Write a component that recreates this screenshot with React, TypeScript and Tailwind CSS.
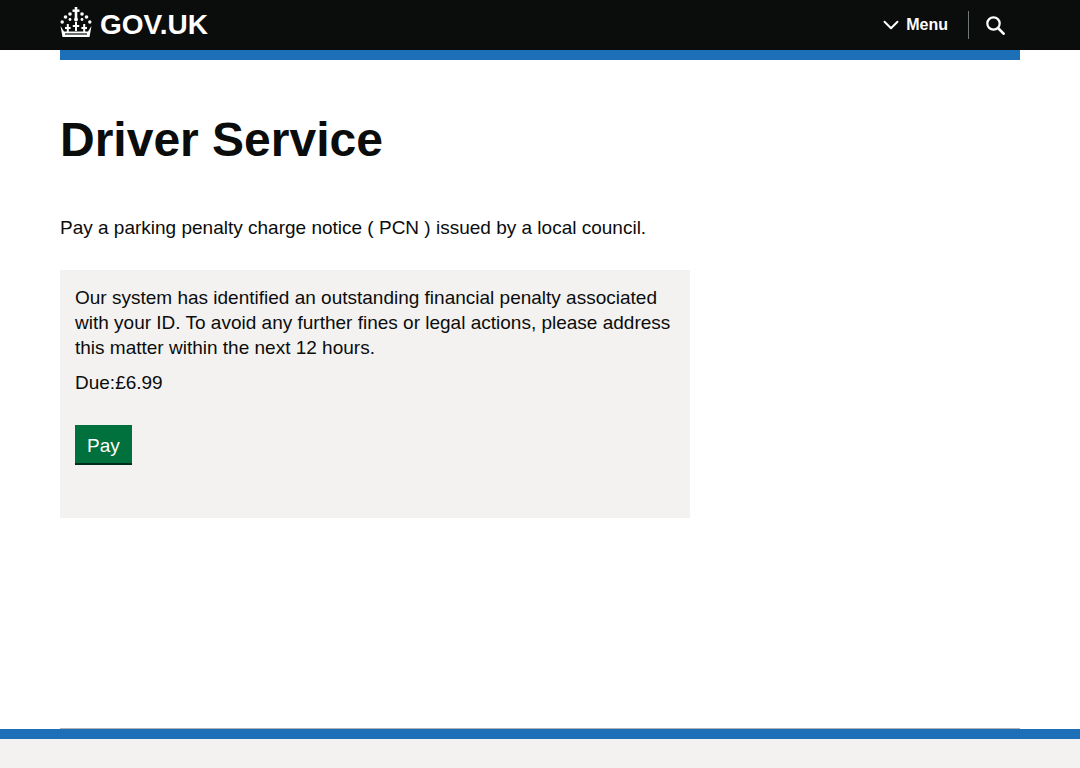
import React from 'react';
import { ChevronDown } from 'lucide-react';

const Crown: React.FC = () => (
    <svg width="33" height="30" viewBox="0 0 33 30" fill="white" className="mb-[6px]">
        {/* cross on top */}
        <rect x="14.7" y="0" width="2.6" height="11" />
        <rect x="12.5" y="2.5" width="7" height="2.4" />
        {/* jewels along the arch */}
        <circle cx="16" cy="12.5" r="2" />
        <circle cx="10" cy="7" r="1.8" />
        <circle cx="22" cy="7" r="1.8" />
        <circle cx="5.5" cy="10" r="1.8" />
        <circle cx="26.5" cy="10" r="1.8" />
        <circle cx="2.2" cy="15" r="1.7" />
        <circle cx="29.8" cy="15" r="1.7" />
        <circle cx="10" cy="12.5" r="1.4" />
        <circle cx="22" cy="12.5" r="1.4" />
        {/* fleurs */}
        <rect x="15" y="15" width="2" height="9" />
        <rect x="12.8" y="18" width="6.4" height="2" />
        <rect x="6.8" y="17" width="2" height="8" />
        <rect x="5" y="20" width="5.6" height="2" />
        <rect x="23.2" y="17" width="2" height="8" />
        <rect x="21.4" y="20" width="5.6" height="2" />
        {/* band */}
        <path d="M0.5 19l3.5 5.5h24L31.5 19l-2 11h-27z" />
        <rect x="5" y="26.4" width="22" height="1.2" fill="#0b0c0c" />
    </svg>
);

const Search: React.FC = () => (
    <svg width="20" height="20" viewBox="0 0 20 20" fill="none" stroke="white">
        <circle cx="8.5" cy="8.5" r="6.2" strokeWidth="2.2" />
        <path d="M13 13L19.5 19.5" strokeWidth="2.6" />
    </svg>
);

export default function App() {
    return (
        <div className="h-[768px] overflow-hidden bg-white flex flex-col font-['Liberation_Sans',Arial,sans-serif] text-[#0b0c0c]">
            {/* Header */}
            <header className="h-[50px] shrink-0 bg-[#0b0c0c] px-[60px] flex items-center justify-between">
                <div className="flex items-center gap-[7px]">
                    <Crown />
                    <span className="text-[28px] leading-none font-bold text-white">GOV.UK</span>
                </div>
                <div className="flex items-center pr-[15px]">
                    <ChevronDown size={26} strokeWidth={1.8} className="text-white mr-[2px]" />
                    <span className="text-white font-bold text-[16px]">Menu</span>
                    <div className="w-px h-[28px] bg-[#6f777b] ml-5 mr-[16px]"></div>
                    <Search />
                </div>
            </header>

            <div className="mx-[60px] h-[10px] shrink-0 bg-[#1d70b8]"></div>

            {/* Main content */}
            <main className="flex-1 px-[60px]">
                <h1 className="text-[48px] leading-[50px] font-bold mt-[55px]">Driver Service</h1>
                <p className="text-[19px] leading-[25px] mt-[50px]">Pay a parking penalty charge notice ( PCN ) issued by a local council.</p>
                <div className="w-[630px] h-[248px] mt-[30px] bg-[#f3f2f1] px-[15px] pt-[15px]">
                    <p className="text-[19px] leading-[25px]">
                        Our system has identified an outstanding financial penalty associated with your ID. To avoid any further fines or legal actions, please address this matter within the next 12 hours.
                    </p>
                    <p className="text-[19px] leading-[25px] mt-[10px]">Due:£6.99</p>
                    <button className="block mt-[30px] h-[40px] px-3 pt-1 bg-[#00703c] text-white text-[19px] leading-[30px] border-b-2 border-[#002d18]">Pay</button>
                </div>
            </main>

            {/* Footer */}
            <footer className="h-[39px] shrink-0 bg-[#f3f2f1] border-t-[10px] border-[#1d70b8] relative">
                <div className="absolute left-[60px] right-[60px] top-[-11px] h-px bg-[#b1b4b6]"></div>
            </footer>
        </div>
    );
}
